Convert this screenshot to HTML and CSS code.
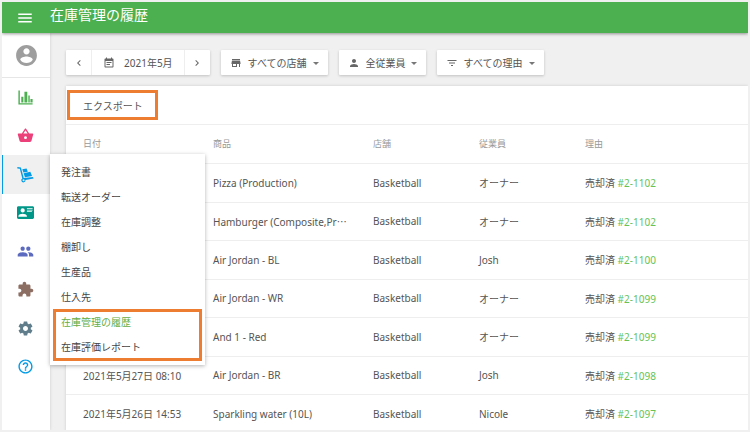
FILE: index.html
```html
<!DOCTYPE html>
<html lang="ja">
<head>
  <meta charset="UTF-8">
  <meta name="viewport" content="width=device-width, initial-scale=1.0">
  <title>在庫管理の履歴</title>
  <link rel="stylesheet" href="styles.css">
</head>
<body>
  <div class="page">
    <header class="header">
      <button class="menu_btn" type="button" aria-label="メニュー">
        <svg viewBox="0 0 24 24"><path d="M3 18h18v-2H3v2zm0-5h18v-2H3v2zm0-7v2h18V6H3z"/></svg>
      </button>
      <h1>在庫管理の履歴</h1>
    </header>

    <div class="body">
      <aside class="sidebar">
        <a class="account" href="#" aria-label="アカウント">
          <svg viewBox="0 0 24 24"><path d="M12 2C6.48 2 2 6.48 2 12s4.480 10 10 10 10-4.480 10-10S17.520 2 12 2zm0 3c1.660 0 3 1.340 3 3s-1.340 3-3 3-3-1.340-3-3 1.340-3 3-3zm0 14.200c-2.500 0-4.710-1.280-6-3.220.030-1.990 4-3.080 6-3.080 1.990 0 5.970 1.090 6 3.080-1.290 1.940-3.500 3.220-6 3.220z"/></svg>
        </a>
        <nav class="nav">
          <a class="nav_item green" href="#" aria-label="レポート">
            <svg viewBox="0 0 24 24"><path d="M2 2h2v18h18v2H2zM6 11h3v8H6zM10.500 4h4v15h-4zM16 9h2v10h-2zM19 14h3v5h-3z"/></svg>
          </a>
          <a class="nav_item pink" href="#" aria-label="商品">
            <svg viewBox="0 0 24 24"><path d="M17.210 9l-4.380-6.560c-.190-.280-.510-.420-.830-.420-.320 0-.640.140-.830.430L6.790 9H2c-.550 0-1 .450-1 1 0 .090.010.180.040.270l2.540 9.270c.230.840 1 1.460 1.920 1.460h13c.920 0 1.690-.620 1.930-1.460l2.540-9.270L23 10c0-.550-.450-1-1-1h-4.790zM9 9l3-4.400L15 9H9zm3 8c-1.100 0-2-.9-2-2s.9-2 2-2 2 .9 2 2-.9 2-2 2z"/></svg>
          </a>
          <a class="nav_item blue active" href="#" aria-label="在庫管理">
            <svg viewBox="0 0 24 24"><path fill-rule="evenodd" d="M.5 1.500L5.500 2L9.500 17L22.500 15.500L23.500 17.500L12 19.800A3 3 0 1 1 7.500 17.500L4 4L.5 3.400zM9.200 18.600a1.400 1.400 0 1 0 .1 2.800a1.400 1.400 0 0 0-.1-2.800z"/><path d="M7.500 4.500L13.500 3.500L15.200 8L9 9.200zM9.400 10.200L18.800 8.200L21.200 14.200L11.200 15.800z"/></svg>
          </a>
          <a class="nav_item teal" href="#" aria-label="従業員">
            <svg viewBox="0 0 24 24"><path fill-rule="evenodd" d="M2 3h20c1.100 0 2 .9 2 2v14c0 1.100-.9 2-2 2H2c-1.100 0-2-.9-2-2V5c0-1.100.9-2 2-2zM14 6v1h8V6zm0 2v1h8V8zm0 2v1h7v-1zM8 6a3 3 0 1 0 0 6 3 3 0 0 0 0-6zm6 12v-1c0-2-4-3.100-6-3.100S2 15 2 17v1z"/></svg>
          </a>
          <a class="nav_item indigo" href="#" aria-label="顧客">
            <svg viewBox="0 0 24 24"><path d="M16 11c1.660 0 2.990-1.340 2.990-3S17.660 5 16 5c-1.660 0-3 1.340-3 3s1.340 3 3 3zm-8 0c1.660 0 2.990-1.340 2.990-3S9.660 5 8 5C6.340 5 5 6.340 5 8s1.340 3 3 3zm0 2c-2.330 0-7 1.170-7 3.500V19h14v-2.500c0-2.330-4.670-3.500-7-3.500zm8 0c-.290 0-.620.020-.970.050 1.160.840 1.970 1.970 1.970 3.450V19h6v-2.500c0-2.330-4.670-3.500-7-3.500z"/></svg>
          </a>
          <a class="nav_item brown" href="#" aria-label="アプリ連携">
            <svg viewBox="0 0 24 24"><path d="M20.500 11H19V7c0-1.100-.9-2-2-2h-4V3.500C13 2.120 11.880 1 10.500 1S8 2.120 8 3.500V5H4c-1.100 0-1.990.9-1.990 2v3.800H3.500c1.490 0 2.700 1.210 2.700 2.700s-1.210 2.700-2.700 2.700H2V20c0 1.100.9 2 2 2h3.800v-1.500c0-1.490 1.210-2.700 2.700-2.700 1.490 0 2.700 1.210 2.700 2.700V22H17c1.100 0 2-.9 2-2v-4h1.500c1.380 0 2.500-1.120 2.500-2.500S21.880 11 20.500 11z"/></svg>
          </a>
          <a class="nav_item slate" href="#" aria-label="設定">
            <svg viewBox="0 0 24 24"><path d="M19.430 12.980c.040-.320.070-.640.070-.980s-.030-.660-.070-.980l2.110-1.650c.190-.150.240-.420.120-.640l-2-3.460c-.120-.220-.390-.300-.610-.220l-2.490 1c-.520-.400-1.080-.730-1.690-.980l-.380-2.650C14.460 2.180 14.250 2 14 2h-4c-.250 0-.460.180-.490.420l-.380 2.650c-.610.250-1.170.590-1.690.980l-2.490-1c-.230-.090-.490 0-.610.220l-2 3.460c-.130.220-.070.490.120.640l2.110 1.650c-.040.320-.070.650-.070.980s.030.660.070.980l-2.110 1.650c-.190.150-.240.420-.120.640l2 3.460c.120.220.390.300.610.220l2.490-1c.520.400 1.080.730 1.690.980l.380 2.650c.030.240.240.420.490.420h4c.250 0 .460-.180.490-.420l.380-2.650c.610-.250 1.170-.590 1.690-.980l2.490 1c.230.090.490 0 .610-.220l2-3.460c.120-.220.070-.490-.120-.640l-2.110-1.650zM12 15.500c-1.930 0-3.500-1.570-3.500-3.500s1.570-3.500 3.500-3.500 3.500 1.570 3.500 3.500-1.570 3.500-3.500 3.500z"/></svg>
          </a>
          <a class="nav_item blue" href="#" aria-label="ヘルプ">
            <svg viewBox="0 0 24 24"><path d="M11 18h2v-2h-2v2zm1-16C6.480 2 2 6.480 2 12s4.480 10 10 10 10-4.480 10-10S17.520 2 12 2zm0 18c-4.410 0-8-3.590-8-8s3.590-8 8-8 8 3.590 8 8-3.590 8-8 8zm0-14c-2.210 0-4 1.790-4 4h2c0-1.100.9-2 2-2s2 .9 2 2c0 2-3 1.750-3 5h2c0-2.250 3-2.500 3-5 0-2.210-1.790-4-4-4z"/></svg>
          </a>
        </nav>

        <!-- 在庫管理サブメニュー -->
        <div class="submenu">
          <a href="#">発注書</a>
          <a href="#">転送オーダー</a>
          <a href="#">在庫調整</a>
          <a href="#">棚卸し</a>
          <a href="#">生産品</a>
          <a href="#">仕入先</a>
          <div class="marked">
            <a class="current" href="#">在庫管理の履歴</a>
            <a href="#">在庫評価レポート</a>
          </div>
        </div>
      </aside>

      <main class="main">
        <div class="filters">
          <div class="period">
            <button class="arrow" type="button" aria-label="前の月">
              <svg viewBox="0 0 24 24"><path d="M15.410 7.410L14 6l-6 6 6 6 1.410-1.410L10.830 12z"/></svg>
            </button>
            <button class="month" type="button">
              <svg viewBox="0 0 24 24"><path d="M17 10H7v2h10v-2zm2-7h-1V1h-2v2H8V1H6v2H5c-1.110 0-2 .9-2 2v14c0 1.100.890 2 2 2h14c1.100 0 2-.9 2-2V5c0-1.100-.9-2-2-2zm0 16H5V8h14v11zm-5-5H7v2h7v-2z"/></svg>
              2021年5月
            </button>
            <button class="arrow" type="button" aria-label="次の月">
              <svg viewBox="0 0 24 24"><path d="M10 6L8.590 7.410 13.170 12l-4.580 4.590L10 18l6-6z"/></svg>
            </button>
          </div>
          <div class="filter">
            <label for="store" aria-label="店舗"><svg viewBox="0 0 24 24"><path d="M20 4H4v2h16V4zm1 10v-2l-1-5H4l-1 5v2h1v6h10v-6h4v6h2v-6h1zm-9 4H6v-4h6v4z"/></svg></label>
            <select id="store"><option>すべての店舗</option></select>
          </div>
          <div class="filter">
            <label for="employee" aria-label="従業員"><svg viewBox="0 0 24 24"><path d="M12 12c2.210 0 4-1.790 4-4s-1.790-4-4-4-4 1.790-4 4 1.790 4 4 4zm0 2c-2.670 0-8 1.340-8 4v2h16v-2c0-2.660-5.330-4-8-4z"/></svg></label>
            <select id="employee"><option>全従業員</option></select>
          </div>
          <div class="filter">
            <label for="reason" aria-label="理由"><svg viewBox="0 0 24 24"><path d="M10 18h4v-2h-4v2zM3 6v2h18V6H3zm3 7h12v-2H6v2z"/></svg></label>
            <select id="reason"><option>すべての理由</option></select>
          </div>
        </div>

        <section class="card">
          <div class="card_top">
            <button class="export" type="button">エクスポート</button>
          </div>
          <table class="history">
            <thead>
              <tr>
                <th class="col_date">日付</th>
                <th class="col_item">商品</th>
                <th class="col_store">店舗</th>
                <th class="col_staff">従業員</th>
                <th>理由</th>
              </tr>
            </thead>
            <tbody>
              <tr><td></td><td>Pizza (Production)</td><td>Basketball</td><td>オーナー</td><td>売却済 <a href="#">#2-1102</a></td></tr>
              <tr><td></td><td>Hamburger (Composite,Pr⋯</td><td>Basketball</td><td>オーナー</td><td>売却済 <a href="#">#2-1102</a></td></tr>
              <tr><td></td><td>Air Jordan - BL</td><td>Basketball</td><td>Josh</td><td>売却済 <a href="#">#2-1100</a></td></tr>
              <tr><td></td><td>Air Jordan - WR</td><td>Basketball</td><td>オーナー</td><td>売却済 <a href="#">#2-1099</a></td></tr>
              <tr><td></td><td>And 1 - Red</td><td>Basketball</td><td>オーナー</td><td>売却済 <a href="#">#2-1099</a></td></tr>
              <tr><td>2021年5月27日 08:10</td><td>Air Jordan - BR</td><td>Basketball</td><td>Josh</td><td>売却済 <a href="#">#2-1098</a></td></tr>
              <tr><td>2021年5月26日 14:53</td><td>Sparkling water (10L)</td><td>Basketball</td><td>Nicole</td><td>売却済 <a href="#">#2-1097</a></td></tr>
            </tbody>
          </table>
        </section>
      </main>
    </div>
  </div>
</body>
</html>
```
FILE: styles.css
```css
*{
  margin: 0;
  padding: 0;
  box-sizing: border-box;
}

body{
  height: 100vh;
  padding: 2px;
  overflow: hidden;
  background: #f0f0f0;
  color: #555;
  font-family: "Noto Sans", "Noto Sans CJK JP", sans-serif;
  font-size: 10px;
  font-weight: 400;
}

a{
  color: inherit;
  text-decoration: none;
}

button,
select{
  border: 0;
  background: none;
  color: inherit;
  font: inherit;
  cursor: pointer;
}

svg{
  display: block;
  fill: currentColor;
}

.page{
  display: flex;
  flex-direction: column;
  height: 100%;
  overflow: hidden;
}

/* header */
.header{
  display: flex;
  align-items: center;
  flex: none;
  height: 31px;
  padding-left: 14px;
  gap: 16px;
  background: #4caf50;
  color: #fff;
  box-shadow: 0 1px 3px rgba(0,0,0,.4);
  position: relative;
  z-index: 3;
}
.header h1{
  padding-bottom: 6px;
  font-size: 14px;
  font-weight: 400;
  line-height: 20px;
}
.menu_btn svg{
  width: 18px;
  height: 18px;
}

.body{
  display: flex;
  flex: 1;
  min-height: 0;
}

/* sidebar */
.sidebar{
  flex: none;
  width: 48px;
  background: #fff;
  box-shadow: 0 0 3px rgba(0,0,0,.15);
  position: relative;
  z-index: 2;
}
.account{
  display: flex;
  justify-content: center;
  align-items: center;
  height: 45px;
  border-bottom: 1px solid #e6e6e6;
  color: #9e9e9e;
}
.account svg{
  width: 25px;
  height: 25px;
}
.nav{
  display: grid;
  grid-template-rows: repeat(8, 1fr);
  height: 308px;
}
.nav_item{
  display: flex;
  justify-content: center;
  align-items: center;
  padding-right: 2px;
}
.nav_item svg{
  width: 17px;
  height: 17px;
}
.nav_item.active{
  background: #f0f0f0;
  box-shadow: inset 1px 0 #039be5;
}
.green{ color: #4caf50; }
.pink{ color: #ec407a; }
.blue{ color: #039be5; }
.teal{ color: #009688; }
.indigo{ color: #5c6bc0; }
.brown{ color: #8d6e63; }
.slate{ color: #607d8b; }

.submenu{
  position: absolute;
  top: 121px;
  left: 48px;
  width: 155px;
  padding: 6px 4px 5px;
  background: #fff;
  box-shadow: 0 1px 4px rgba(0,0,0,.3);
  color: #444;
}
.submenu a{
  display: block;
  padding-left: 7px;
  line-height: 25px;
}
.marked{
  outline: 3px solid #ed7d31;
  outline-offset: -2px;
}
.submenu .current{
  color: #65ad45;
}

/* main */
.main{
  flex: 1;
  min-width: 0;
  padding: 17px 0 0 16px;
}
.filters{
  display: flex;
  gap: 11px;
  margin-bottom: 11px;
}
.period,
.filter{
  display: flex;
  align-items: center;
  height: 25px;
  background: #fff;
  border-radius: 1px;
  box-shadow: 0 1px 3px rgba(0,0,0,.2);
}
.filters svg{
  width: 12px;
  height: 12px;
  color: #666;
}
.arrow{
  display: flex;
  justify-content: center;
  align-items: center;
  width: 25px;
  height: 25px;
}
.month{
  display: flex;
  align-items: center;
  height: 25px;
  padding: 0 11px;
  gap: 9px;
  border: solid #eee;
  border-width: 0 1px;
}
.filter{
  padding: 0 8px 0 9px;
  gap: 6px;
  position: relative;
}
.filter select{
  appearance: none;
  height: 25px;
  padding-right: 12px;
}
/* caret */
.filter::after{
  content: "";
  position: absolute;
  right: 9px;
  top: 12px;
  border: 3px solid transparent;
  border-top-color: #777;
  border-bottom: 0;
  pointer-events: none;
}

.card{
  background: #fff;
  box-shadow: 0 0 3px rgba(0,0,0,.15);
}
.card_top{
  display: flex;
  align-items: center;
  height: 38px;
  padding-left: 1px;
}
.export{
  height: 30px;
  padding: 0 12px 0 13px;
  border: 3px solid #ed7d31;
}

.history{
  width: 100%;
  height: 308px;
  table-layout: fixed;
  border-collapse: collapse;
}
.history th,
.history td{
  border-top: 1px solid #eee;
  text-align: left;
  font-weight: 400;
  white-space: nowrap;
}
.history th{
  height: 39px;
  padding-bottom: 2px;
  color: #999;
  font-size: 9px;
}
.history th:first-child,
.history td:first-child{
  padding-left: 17px;
}
.history td a{
  color: #66c353;
}
.col_date{ width: 147px; }
.col_item{ width: 160px; }
.col_store{ width: 106px; }
.col_staff{ width: 106px; }
```
